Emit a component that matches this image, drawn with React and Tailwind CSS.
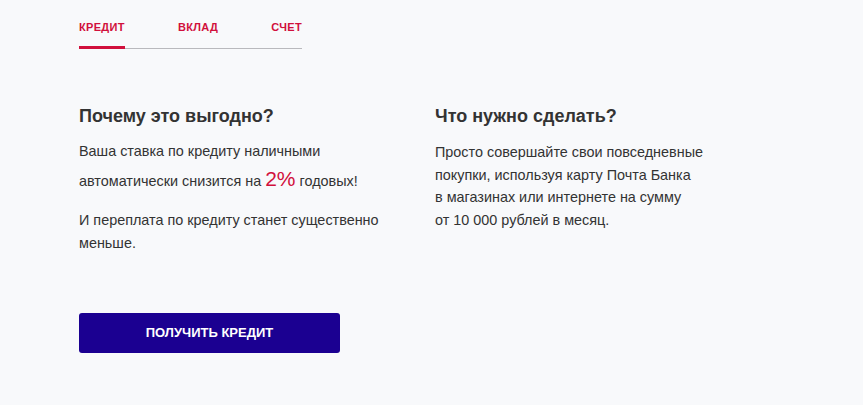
import React, { useState } from 'react';

const tabs = ['Кредит', 'Вклад', 'Счет'];

const App = () => {
  const [active, setActive] = useState(0);

  return (
    <div className="min-h-screen bg-[#f8f9fb] pl-[79px] pt-[20px] text-[#333333]" style={{ fontFamily: '"Liberation Sans", Arial, sans-serif' }}>
      {/* tabs */}
      <div className="flex w-[223px] justify-between border-b border-[#b9b9bd]">
        {tabs.map((t, i) => (
          <button
            key={t}
            onClick={() => setActive(i)}
            className={`-mb-px pb-[12px] text-[11px] leading-[14px] font-bold uppercase tracking-[0.3px] text-[#d1103c] border-b-[3px] ${
              active === i ? 'border-[#d1103c]' : 'border-transparent'
            }`}
          >
            {t}
          </button>
        ))}
      </div>

      {/* content */}
      <div className="mt-[56px] flex">
        <div className="w-[356px]">
          <h2 className="text-[18px] leading-[22px] font-bold text-[#333]">Почему это выгодно?</h2>
          <p className="mt-[13px] text-[14.4px] leading-[22px]">
            Ваша ставка по кредиту наличными
            <br />
            автоматически снизится на{' '}
            <span className="text-[21px] leading-[34px] text-[#d1103c]">2%</span> годовых!
          </p>
          <p className="mt-[13px] text-[14.4px] leading-[23px]">
            И переплата по кредиту станет существенно
            <br />
            меньше.
          </p>
        </div>
        <div className="w-[300px]">
          <h2 className="text-[18px] leading-[22px] font-bold text-[#333]">Что нужно сделать?</h2>
          <p className="mt-[14px] text-[14.4px] leading-[22.5px]">
            Просто совершайте свои повседневные
            <br />
            покупки, используя карту Почта Банка
            <br />
            в магазинах или интернете на сумму
            <br />
            от 10 000 рублей в месяц.
          </p>
        </div>
      </div>

      <button className="mt-[58px] flex h-[40px] w-[261px] items-center justify-center rounded-[3px] bg-[#1b0091] text-[13px] font-bold uppercase text-white">
        Получить кредит
      </button>
    </div>
  );
};

export default App;
